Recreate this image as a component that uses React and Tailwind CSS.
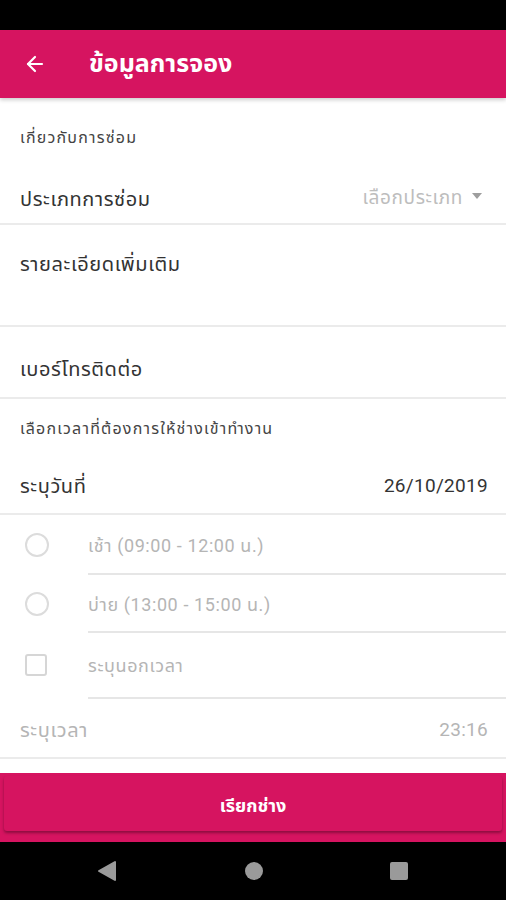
import { ArrowLeft } from "lucide-react";

const font = { fontFamily: 'Roboto, "Noto Sans Thai", "Noto Sans", sans-serif' };

const Divider = ({ inset }) => (
  <div className={inset ? "ml-[88px] h-[2px] bg-[#e6e6e6]" : "h-[2px] bg-[#ebebeb]"} />
);

const Radio = () => (
  <div className="w-[24px] h-[24px] rounded-full border-2 border-[#dcdcdc]" />
);

const Checkbox = () => (
  <div className="w-[22px] h-[22px] rounded-[3px] border-2 border-[#d6d6d6]" />
);

const OptionRow = ({ control, label, h }) => (
  <div className={`flex items-center ${h}`}>
    <div className="w-[88px] pl-[25px] flex items-center">{control}</div>
    <span className="text-[18px] tracking-[0.6px] text-[#b5b5b5]">{label}</span>
  </div>
);

export default function App() {
  return (
    <div className="w-[506px] h-[900px] flex flex-col bg-white overflow-hidden" style={font}>
      {/* status bar */}
      <div className="h-[30px] bg-black shrink-0" />

      {/* toolbar */}
      <div className="h-[68px] bg-[#d61460] flex items-center shrink-0 shadow-[0_2px_4px_rgba(0,0,0,0.2)] relative z-10">
        <ArrowLeft className="ml-[23px] w-[24px] h-[24px] text-white" strokeWidth={2.2} />
        <h1 className="ml-[42px] text-[25px] font-bold text-white">ข้อมูลการจอง</h1>
      </div>

      <div className="flex-1 flex flex-col">
        <div className="h-[78px] pl-[20px] pt-[28px] text-[16px] tracking-[1.2px] text-[#444]">เกี่ยวกับการซ่อม</div>

        <div className="h-[49px] flex items-center justify-between pl-[20px] pr-[23px] -mt-[2px]">
          <span className="text-[20px] tracking-[0.6px] text-[#333]">ประเภทการซ่อม</span>
          <span className="flex items-center text-[19px] tracking-[0.6px] text-[#bdbdbd]">
            เลือกประเภท
            <svg width="12" height="8" viewBox="0 0 12 8" className="ml-[8px] -mt-[6px]">
              <path d="M1 1h10L6 7z" fill="#9e9e9e" />
            </svg>
          </span>
        </div>
        <Divider />

        <div className="h-[100px] pl-[20px] pt-[24px] text-[20px] tracking-[0.6px] text-[#333]">รายละเอียดเพิ่มเติม</div>
        <Divider />

        <div className="h-[70px] flex items-center pt-[14px] pl-[20px] text-[20px] tracking-[0.6px] text-[#333]">เบอร์โทรติดต่อ</div>
        <Divider />

        <div className="h-[58px] pl-[20px] pt-[18px] text-[16px] tracking-[1.2px] text-[#444]">เลือกเวลาที่ต้องการให้ช่างเข้าทำงาน</div>

        <div className="h-[56px] flex items-center justify-between pl-[20px] pr-[18px] pt-[2px]">
          <span className="text-[20px] tracking-[0.6px] text-[#333]">ระบุวันที่</span>
          <span className="text-[19px] tracking-[0.3px] text-[#333]">26/10/2019</span>
        </div>
        <Divider />

        <OptionRow h="h-[58px] pt-[2px]" control={<Radio />} label="เช้า (09:00 - 12:00 น.)" />
        <Divider inset />
        <OptionRow h="h-[56px] pt-[2px]" control={<Radio />} label="บ่าย (13:00 - 15:00 น.)" />
        <Divider inset />
        <OptionRow h="h-[64px]" control={<Checkbox />} label="ระบุนอกเวลา" />
        <Divider inset />

        <div className="h-[58px] flex items-center justify-between pl-[20px] pr-[18px] pt-[4px]">
          <span className="text-[20px] tracking-[0.6px] text-[#b5b5b5]">ระบุเวลา</span>
          <span className="text-[19px] tracking-[0.3px] text-[#b5b5b5]">23:16</span>
        </div>
        <Divider />
      </div>

      {/* bottom action */}
      <div className="h-[69px] bg-[#d61460] shrink-0 px-[4px] pt-[3px]">
        <button className="w-full h-[55px] pt-[4px] rounded-[3px] bg-[#d61460] shadow-[0_2px_3px_rgba(0,0,0,0.35)] text-white text-[18px] font-bold">
          เรียกช่าง
        </button>
      </div>

      {/* nav bar */}
      <div className="h-[58px] bg-black shrink-0 flex items-center justify-between pl-[97px] pr-[98px]">
        <svg width="20" height="22" viewBox="0 0 20 22">
          <path d="M18 2v18L2 11z" fill="#9a9a9a" stroke="#9a9a9a" strokeLinejoin="round" strokeWidth="2" />
        </svg>
        <div className="w-[18px] h-[18px] rounded-full bg-[#9a9a9a]" />
        <div className="w-[18px] h-[18px] rounded-[2px] bg-[#9a9a9a]" />
      </div>
    </div>
  );
}
